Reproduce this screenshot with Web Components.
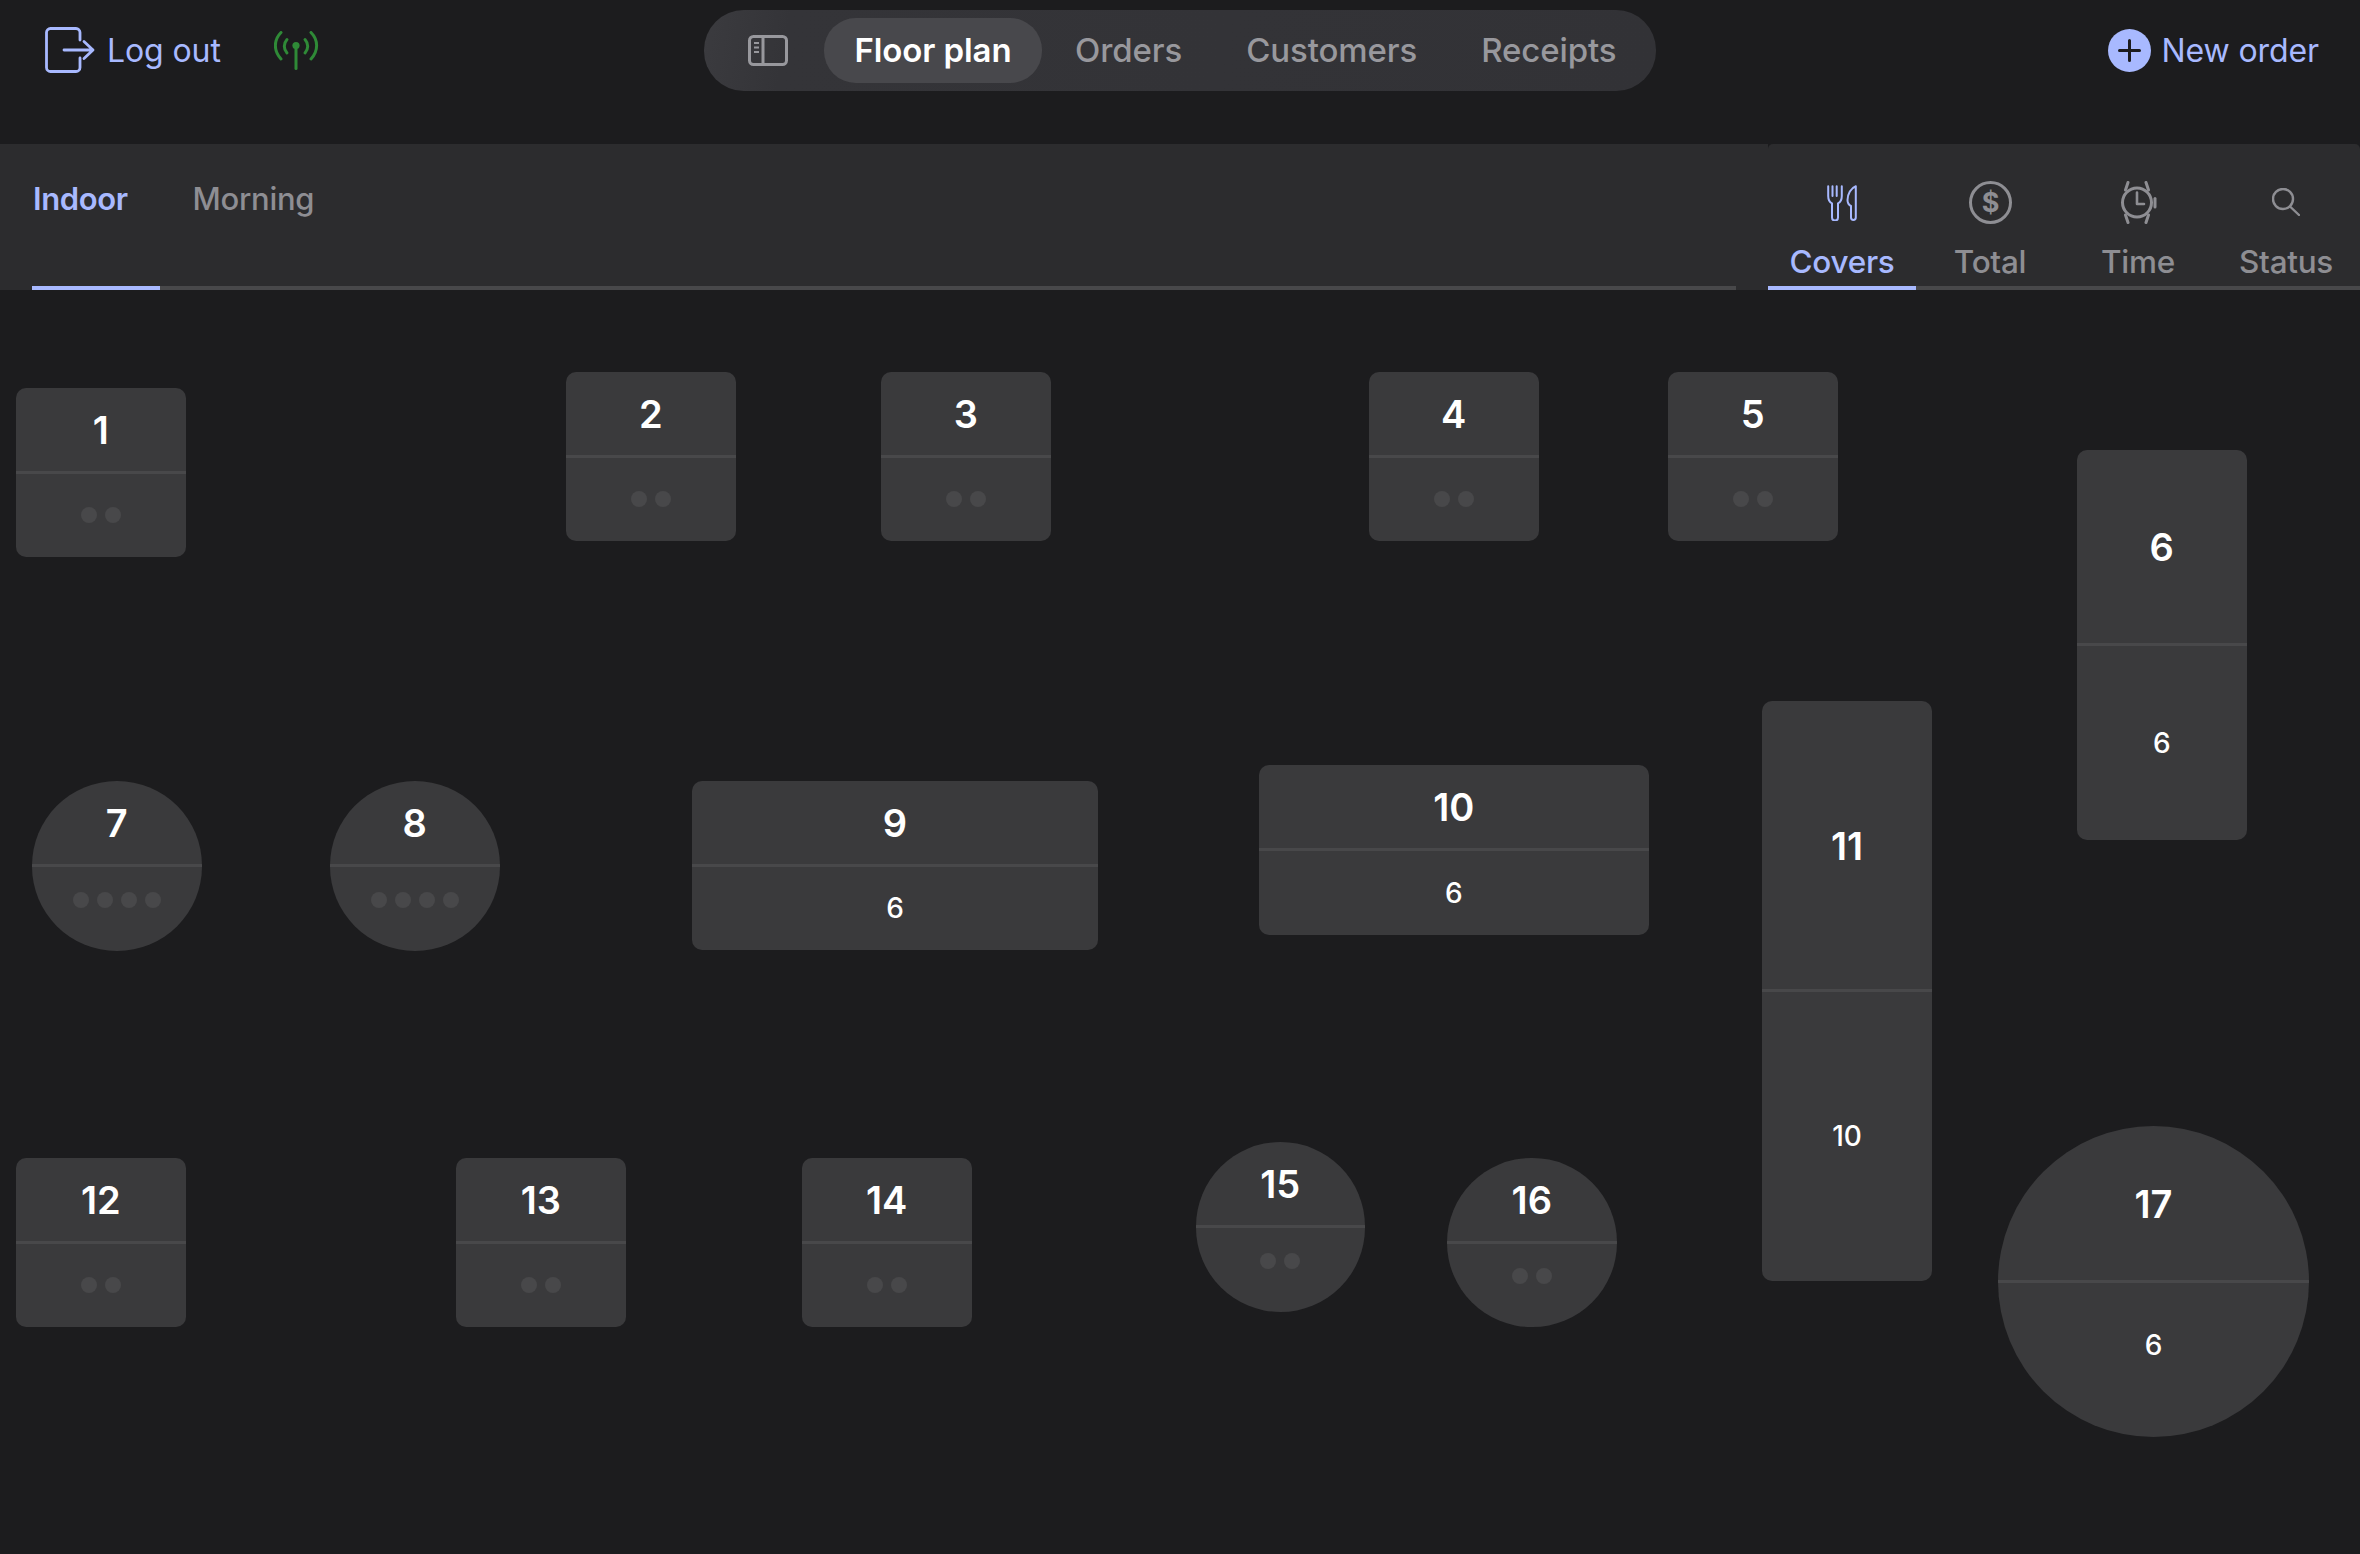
<!DOCTYPE html>
<html><head><meta charset="utf-8"><title>Floor plan</title>
<style>
html,body{margin:0;padding:0;background:#1c1c1e;height:100%;overflow:hidden}
body{font-family:Inter,"Liberation Sans",sans-serif;color:#fff;width:2360px;height:1554px;display:flex;flex-direction:column}
</style></head><body>
<pos-topbar>
  <pos-logout slot="left">Log out</pos-logout>
  <pos-nav slot="center">
    <pos-navitem active>Floor plan</pos-navitem>
    <pos-navitem>Orders</pos-navitem>
    <pos-navitem>Customers</pos-navitem>
    <pos-navitem>Receipts</pos-navitem>
  </pos-nav>
  <pos-neworder slot="right">New order</pos-neworder>
</pos-topbar>
<pos-tabbar>
  <pos-room active>Indoor</pos-room>
  <pos-room>Morning</pos-room>
  <pos-view slot="views" icon="covers" active>Covers</pos-view>
  <pos-view slot="views" icon="total">Total</pos-view>
  <pos-view slot="views" icon="time">Time</pos-view>
  <pos-view slot="views" icon="status">Status</pos-view>
</pos-tabbar>
<pos-plan>
  <pos-table x="16" y="388" w="169.5" h="169" seats="2">1</pos-table>
  <pos-table x="566" y="372" w="169.5" h="169" seats="2">2</pos-table>
  <pos-table x="881" y="372" w="169.5" h="169" seats="2">3</pos-table>
  <pos-table x="1369" y="372" w="169.5" h="169" seats="2">4</pos-table>
  <pos-table x="1668" y="372" w="169.5" h="169" seats="2">5</pos-table>
  <pos-table x="2077" y="450" w="169.5" h="389.5" count="6">6</pos-table>
  <pos-table x="32" y="781" w="169.5" h="169.5" seats="4" round>7</pos-table>
  <pos-table x="330" y="781" w="169.5" h="169.5" seats="4" round>8</pos-table>
  <pos-table x="692" y="780.5" w="406" h="169.5" count="6">9</pos-table>
  <pos-table x="1259" y="765" w="389.5" h="169.5" count="6">10</pos-table>
  <pos-table x="1762" y="701" w="170" h="579.5" count="10">11</pos-table>
  <pos-table x="16" y="1157.5" w="169.5" h="169.5" seats="2">12</pos-table>
  <pos-table x="456" y="1157.5" w="169.5" h="169.5" seats="2">13</pos-table>
  <pos-table x="802" y="1157.5" w="169.5" h="169.5" seats="2">14</pos-table>
  <pos-table x="1195.5" y="1142" w="169.5" h="169.5" seats="2" round>15</pos-table>
  <pos-table x="1447" y="1157.5" w="169.5" h="169.5" seats="2" round>16</pos-table>
  <pos-table x="1998" y="1126" w="311" h="311" count="6" round style="--lift:30px">17</pos-table>
</pos-plan>
<script>
const ACCENT='#a8b9ff';
function def(name,html){
  customElements.define(name,class extends HTMLElement{
    connectedCallback(){
      if(this.shadowRoot)return;
      const r=this.attachShadow({mode:'open'});
      r.innerHTML=typeof html==='function'?html(this):html;
    }
  });
}
def('pos-topbar',`<style>
:host{display:grid;grid-template-columns:1fr auto 1fr;padding:10px 41px 0;box-sizing:border-box;flex:none;width:2360px;height:144px;align-items:start}
.l{display:flex;height:81px;align-items:center;padding-left:4px}
.c{display:flex}
.r{display:flex;height:81px;align-items:center;justify-content:flex-end}
</style><div class="l"><slot name="left"></slot></div><div class="c"><slot name="center"></slot></div><div class="r"><slot name="right"></slot></div>`);
def('pos-logout',`<style>
:host{display:flex;align-items:center;color:${ACCENT};font-size:32px;letter-spacing:-.1px}
svg{display:block;flex:none}
.t{margin-left:12px;width:114px;white-space:nowrap}
.s{margin-left:53px}
</style>
<svg width="50" height="47" viewBox="45 27 50 47" fill="none" stroke="${ACCENT}" stroke-width="2.800" stroke-linecap="round" stroke-linejoin="round"><path d="M80 40V32.500a4 4 0 0 0-4-4H50.500a4 4 0 0 0-4 4V67.500a4 4 0 0 0 4 4H76a4 4 0 0 0 4-4V58"/><path d="M64 50H93M84 41.500L93 50L84 58.500"/></svg>
<span class="t"><slot></slot></span>
<svg class="s" width="46" height="40" viewBox="274 31 46 40" fill="none" stroke="#2f8a37" stroke-width="3" stroke-linecap="round"><circle cx="296" cy="45.500" r="3.600" fill="#2f8a37" stroke="none"/><path d="M296 46V68.500"/><path d="M287 39.500c-3.600 4-3.600 9.500 0 13.500M305 39.500c3.600 4 3.600 9.500 0 13.500"/><path d="M281 32.500c-7.500 7.500-7.500 18.500 0 26.500M311 32.500c7.500 7.500 7.500 18.500 0 26.500"/></svg>`);
def('pos-nav',`<style>
:host{display:flex;align-items:center;box-sizing:border-box;height:81px;width:952px;padding:0 8px;border-radius:40px;background:linear-gradient(100deg,#3b3b3f 0,#343438 9%,#323236 100%)}
svg{display:block;flex:none;margin:0 36px}
.i{display:flex;gap:2px;align-items:center}
</style>
<svg width="40" height="31" viewBox="0 0 40 31" fill="none" stroke="#98989d" stroke-width="3"><rect x="1.500" y="1.500" width="37" height="28" rx="4"/><path d="M15 1.500V29.500"/><path d="M6 8H11M6 12.500H11M6 17H11" stroke-width="2"/></svg>
<div class="i"><slot></slot></div>`);
def('pos-navitem',`<style>
:host{display:flex;align-items:center;box-sizing:border-box;height:65px;padding:0 31px 2px;border-radius:32px;font-size:33px;font-weight:500;color:#98989d;letter-spacing:-.1px;white-space:nowrap}
:host([active]){background:#48484c;color:#fff;font-weight:600;padding:0 30.5px 2px}
</style><slot></slot>`);
def('pos-neworder',`<style>
:host{display:flex;align-items:center;color:${ACCENT};font-size:32px;letter-spacing:-.1px;white-space:nowrap}
svg{display:block;flex:none;margin-right:11px}
</style><svg width="43" height="43" viewBox="0 0 43 43"><circle cx="21.500" cy="21.500" r="21.500" fill="${ACCENT}"/><path d="M21.500 11.500V31.500M11.500 21.500H31.500" stroke="#1c1c1e" stroke-width="3" stroke-linecap="round"/></svg><slot></slot>`);
def('pos-tabbar',`<style>
:host{display:flex;flex:none;height:146px;width:2360px}
.left{flex:1;background:#2c2c2e;box-sizing:border-box;padding:0 32px;display:flex}
.rooms{flex:1;display:flex;gap:32px;border-bottom:4px solid #48484a;height:146px;box-sizing:border-box}
.right{width:592px;flex:none;background:#2c2c2e;border-radius:5px 5px 0 0;display:flex}
</style><div class="left"><div class="rooms"><slot></slot></div></div><div class="right"><slot name="views"></slot></div>`);
def('pos-room',`<style>
:host{display:block;box-sizing:border-box;height:146px;padding:33px 32px 0 1px;font-size:31px;font-weight:500;color:#8e8e93;line-height:44px;letter-spacing:-.3px;white-space:nowrap}
:host([active]){color:${ACCENT};font-weight:600;letter-spacing:-.4px;border-bottom:4px solid ${ACCENT}}
</style><slot></slot>`);
const ICONS={
covers:`<svg width="30" height="36" viewBox="0 0 30 36" fill="none" stroke="currentColor" stroke-width="2" stroke-linecap="round" stroke-linejoin="round" style="margin-top:41px"><path d="M1.200 1.200V11c0 4 1.500 6.300 3.800 7.300V32.500a3 3 0 0 0 6 0V18.300c2.300-1 3.800-3.300 3.800-7.300V1.200"/><path d="M5.500 1.200V11M9.700 1.200V11"/><path d="M28.800 1.200C24 3 20.500 9 20.500 15c0 3 1.500 5 3.500 6V32.500a2.400 2.400 0 0 0 4.800 0V1.200"/></svg>`,
total:`<svg width="43" height="43" viewBox="0 0 43 43" fill="none" stroke="currentColor" stroke-width="3" style="margin-top:37px"><circle cx="21.500" cy="21.500" r="20"/><text x="21.500" y="31" text-anchor="middle" fill="currentColor" stroke="none" font-family="Inter" font-weight="700" font-size="27">$</text></svg>`,
time:`<svg width="37" height="43" viewBox="0 0 37 43" fill="none" stroke="currentColor" stroke-width="3" stroke-linecap="round" stroke-linejoin="round" style="margin-top:37px"><circle cx="17" cy="21.500" r="14.500"/><path d="M5.500 9L8 1.500M28.500 9L26 1.500M5.500 34L8 41.500M28.500 34L26 41.500"/><path d="M17 11.500V23H24" stroke-width="2.600"/><path d="M35 17.500V26"/></svg>`,
status:`<svg width="28" height="28" viewBox="0 0 28 28" fill="none" stroke="currentColor" stroke-width="2.400" stroke-linecap="round" style="margin-top:44px"><circle cx="11" cy="11" r="10"/><path d="M18 18.500L27 27"/></svg>`};
def('pos-view',el=>`<style>
:host{display:flex;flex-direction:column;align-items:center;box-sizing:border-box;width:148px;height:146px;border-bottom:4px solid #48484a;color:#8e8e93;font-size:31.5px;font-weight:500;letter-spacing:-.3px}
:host([active]){color:${ACCENT};border-bottom-color:${ACCENT}}
svg{display:block;flex:none}
.i{height:80px;display:flex;align-items:flex-start;justify-content:center}
.t{line-height:44px;margin-top:16px;white-space:nowrap}
</style><div class="i">${ICONS[el.getAttribute('icon')]}</div><div class="t"><slot></slot></div>`);
def('pos-plan',`<style>:host{display:block;position:relative;flex:1;width:2360px}</style><slot></slot>`);
def('pos-table',el=>{
  const a=n=>el.getAttribute(n);
  const seats=+a('seats')||0;
  const round=el.hasAttribute('round');
  const dots=seats?`<span class="dots">${'<i></i>'.repeat(seats)}</span>`:`<span class="count">${a('count')}</span>`;
  return `<style>
:host{display:flex;flex-direction:column;position:absolute;left:${a('x')}px;top:${a('y')-290}px;width:${a('w')}px;height:${a('h')}px;background:#3a3a3c;border-radius:${round?'50%':'10px'};overflow:hidden}
.top,.bot{flex:1 1 0;display:flex;align-items:center;justify-content:center;min-height:0}
.top{font-size:38px;font-weight:600;color:#fff;line-height:1}
.num{margin-top:1px}
hr{margin:0;border:0;height:3px;background:#48484a;flex:none;width:100%}
.dots{margin-bottom:${round?'var(--lift,18px)':'1px'}}
.count{margin-bottom:${round?'var(--lift,18px)':'0'}}
.dots{display:flex;gap:8px}
i{display:block;width:16px;height:16px;border-radius:50%;background:#48484a}
.count{font-size:28px;font-weight:500;color:#fff;line-height:1}
</style><div class="top"><span class="num"><slot></slot></span></div><hr><div class="bot">${dots}</div>`;
});
</script>
</body></html>
